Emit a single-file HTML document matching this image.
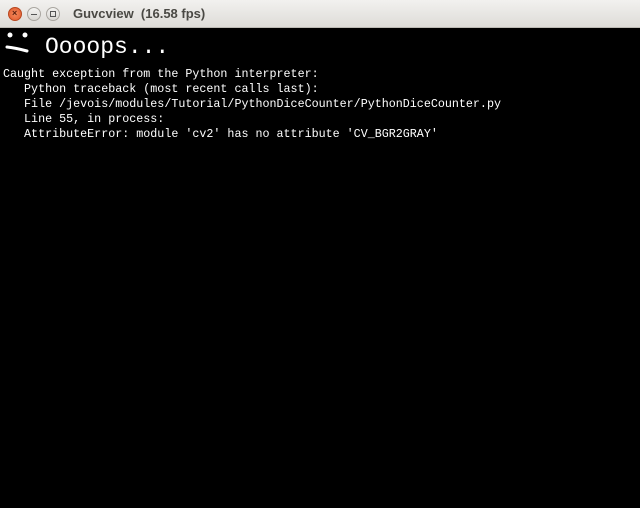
<!DOCTYPE html>
<html><head><meta charset="utf-8"><style>
html,body{margin:0;padding:0;width:640px;height:508px;overflow:hidden;background:#000;}
.tb{position:absolute;left:0;top:0;width:640px;height:28px;background:linear-gradient(#f2f1ef,#dedcd8);border-bottom:1px solid #bdbab4;box-sizing:border-box;}
.btn{position:absolute;top:7px;width:14px;height:14px;border-radius:50%;box-sizing:border-box;}
.c{left:8px;background:radial-gradient(#f48a5c,#e0582c);border:1px solid #b8471f;}
.m{left:27px;background:linear-gradient(#f4f3f1,#d8d6d2);border:1px solid #a9a6a0;}
.x{left:46px;background:linear-gradient(#f4f3f1,#d8d6d2);border:1px solid #a9a6a0;}
.title{position:absolute;left:73px;top:6px;font:bold 13px "Liberation Sans",sans-serif;color:#4a4944;}
.big{position:absolute;left:45px;top:34px;font:23px "Liberation Mono",monospace;color:#fff;}
pre{position:absolute;left:3px;top:67px;margin:0;font:11.7px/15px "Liberation Mono",monospace;color:#fff;}
</style></head><body>
<div class="tb">
<div class="btn c"><span style="position:absolute;left:3px;top:0px;font:bold 9px 'Liberation Sans',sans-serif;color:#5a2010">×</span></div>
<div class="btn m"><div style="position:absolute;left:3px;top:6px;width:6px;height:1px;background:#555"></div></div>
<div class="btn x"><div style="position:absolute;left:3px;top:3px;width:6px;height:6px;border:1px solid #555;box-sizing:border-box"></div></div>
<div class="title">Guvcview&nbsp; (16.58 fps)</div>
</div>
<svg style="position:absolute;left:0;top:28px" width="40" height="28">
<circle cx="10" cy="7" r="2.5" fill="#fff"/><circle cx="25" cy="7" r="2.5" fill="#fff"/>
<path d="M7 19 Q16 20 27 23" stroke="#fff" stroke-width="3" fill="none" stroke-linecap="round"/>
</svg>
<div class="big">Oooops...</div>
<pre>Caught exception from the Python interpreter:
   Python traceback (most recent calls last):
   File /jevois/modules/Tutorial/PythonDiceCounter/PythonDiceCounter.py
   Line 55, in process:
   AttributeError: module 'cv2' has no attribute 'CV_BGR2GRAY'</pre>
</body></html>
